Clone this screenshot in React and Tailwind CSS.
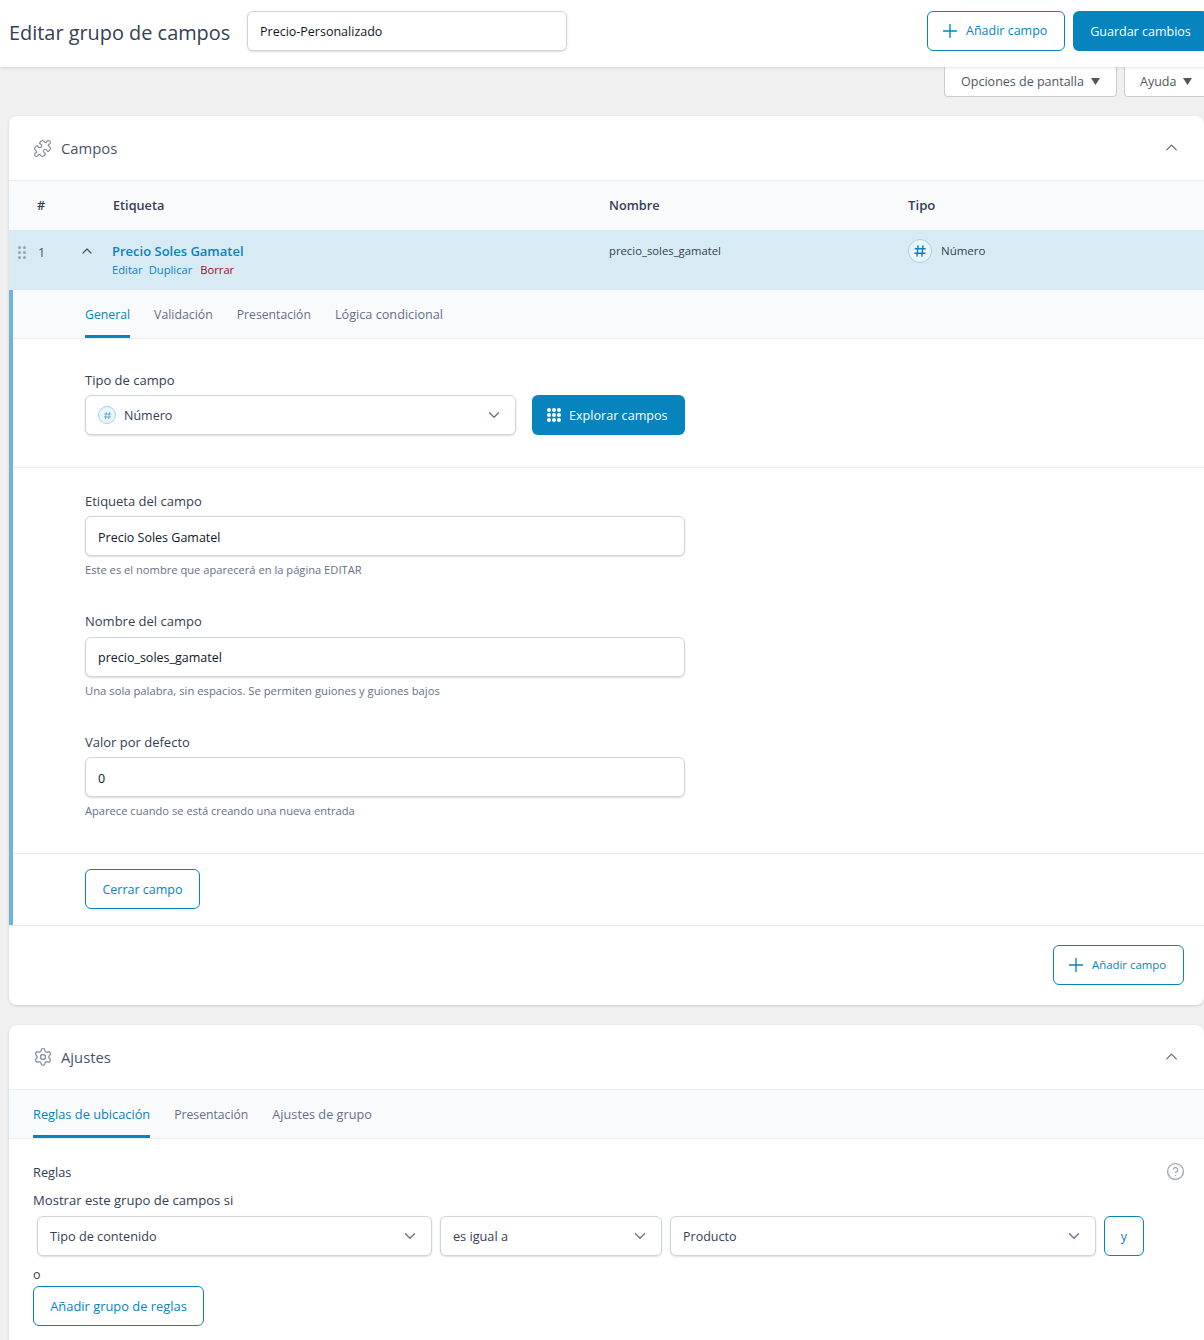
import React from "react";
import { Puzzle, Settings, CircleHelp, ChevronDown, ChevronUp, Plus } from "lucide-react";

const font = { fontFamily: '"Open Sans", "Noto Sans", sans-serif' };

function Caret() {
  return (
    <svg width="9" height="7" viewBox="0 0 9 7" className="ml-[7px] -mt-[2px]"><path d="M0 0h9L4.5 7z" fill="#50575e" /></svg>
  );
}

function OutlineBtn({ children, className = "", size = "text-[12.5px]" }) {
  return (
    <button className={`h-10 flex items-center rounded-md border border-[#0783be] bg-white text-[#0783be] shrink-0 ${size} ${className}`}>
      {children}
    </button>
  );
}

function Tab({ children, active, className = "text-[12.5px]" }) {
  return (
    <div className={`h-full flex items-center border-b-[3px] pt-[5px] ${className} ${active ? "border-[#0783be] text-[#0783be]" : "border-transparent text-[#667085]"}`}>
      {children}
    </div>
  );
}

function Select({ className, children, text, textClass = "text-[12.5px]" }) {
  return (
    <div className={`h-10 flex items-center justify-between pl-3 pr-[12px] bg-white border border-[#d0d5dd] rounded-md shadow-[0_1px_2px_rgba(16,24,40,0.15)] text-[#344054] ${className}`}>
      <div className="flex items-center">{children}<span className={`pt-[2px] ${textClass}`}>{text}</span></div>
      <ChevronDown size={18} color="#667085" strokeWidth={1.7} />
    </div>
  );
}

function Field({ label, value, hint, className = "", gap = "mt-[5px]", pad = "pt-[4px]", hintSize = "text-[11.15px]" }) {
  return (
    <div className={className}>
      <div className="h-[19px] text-[13px] leading-[19px] text-[#344054]">{label}</div>
      <div className={`${gap} ${pad} h-10 w-[600px] flex items-center px-3 bg-white border border-[#d0d5dd] rounded-md shadow-[0_1px_2px_rgba(16,24,40,0.15)] text-[12.5px] text-[#101828]`}>{value}</div>
      <div className={`mt-[6px] h-4 leading-4 text-[#667085] ${hintSize}`}>{hint}</div>
    </div>
  );
}

function CardHeader({ icon, title }) {
  return (
    <div className="h-[65px] flex items-center justify-between pl-6 pr-[23px] border-b border-[#eaecf0]">
      <div className="flex items-center gap-[9px]">
        {icon}
        <span className="pt-[1px] text-[14.8px] text-[#475467]">{title}</span>
      </div>
      <ChevronUp size={19} color="#667085" strokeWidth={1.7} className="-mt-[2px]" />
    </div>
  );
}

function Dots() {
  const p = [3, 8, 13];
  return (
    <svg width="16" height="16" viewBox="0 0 16 16" className="mr-[7px]">
      {p.map((y) => p.map((x) => <circle key={`${x}-${y}`} cx={x} cy={y} r="2" fill="#ffffff" />))}
    </svg>
  );
}

function Grip() {
  return (
    <svg width="8" height="13" viewBox="0 0 8 13">
      {[1.5, 6.5, 11.5].map((y) => [1.5, 6.5].map((x) => <circle key={`${x}-${y}`} cx={x} cy={y} r="1.5" fill="#98a2b3" />))}
    </svg>
  );
}

function HashBadge({ size, stroke, textSize }) {
  return (
    <span className={`flex items-center justify-center rounded-full border border-[#a5d2e7] bg-[#ebf5fa] ${size}`}>
      <svg viewBox="0 0 12 12" className={textSize} fill="none" stroke={stroke} strokeWidth="1.2">
        <path d="M4.4 1.2 3.4 10.8M8.6 1.2 7.6 10.8M1.5 4.1h9.4M1.2 7.9h9.4" />
      </svg>
    </span>
  );
}

export default function App() {
  return (
    <div style={font} className="h-[1340px] w-[1204px] overflow-hidden bg-[#f0f0f0]">
      <header className="relative z-10 h-[67px] bg-white shadow-[0_1px_3px_rgba(16,24,40,0.12)] flex items-center pl-[9px] -mr-1">
        <h1 className="w-[238px] whitespace-nowrap text-[19.9px] leading-none text-[#344054] -mt-[1px]">Editar grupo de campos</h1>
        <div className="w-[320px] h-10 flex items-center px-3 pt-[3px] bg-white border border-[#d0d5dd] rounded-md shadow-[0_1px_2px_rgba(16,24,40,0.15)] text-[12.5px] text-[#101828] -mt-[5px]">Precio-Personalizado</div>
        <div className="ml-auto flex gap-2 -mt-[5px]">
          <OutlineBtn className="w-[138px] gap-[5px] pl-[11px] -ml-px">
            <Plus size={22} strokeWidth={1.5} />
            <span className="pt-[1px]">Añadir campo</span>
          </OutlineBtn>
          <button className="h-10 w-[135px] pt-[3px] rounded-md bg-[#0783be] text-white text-[12.5px]">Guardar cambios</button>
        </div>
      </header>

      <div className="flex justify-end gap-[7px] -mr-[6px]">
        <div className="h-[30px] w-[173px] pt-[2px] flex items-center justify-center bg-white border border-t-0 border-[#c9ced6] rounded-b text-[12.5px] text-[#50575e]">Opciones de pantalla<Caret /></div>
        <div className="h-[30px] w-[86px] pt-[2px] flex items-center pl-[15px] bg-white border border-t-0 border-[#c9ced6] rounded-b text-[12.5px] text-[#50575e]">Ayuda<Caret /></div>
      </div>

      <main className="pl-[9px] pt-[19px] flex flex-col gap-5">
        <section className="w-[1195px] bg-white rounded-lg shadow-[0_1px_3px_rgba(16,24,40,0.15)]">
          <CardHeader icon={<Puzzle size={19} color="#8a94a6" strokeWidth={1.6} />} title="Campos" />

          <div className="h-[49px] grid grid-cols-[104px_496px_299px_1fr] items-center bg-[#f9fafb] text-[12.7px] font-semibold text-[#344054]">
            <div className="pl-[28px]">#</div>
            <div>Etiqueta</div>
            <div>Nombre</div>
            <div className="text-[13.2px]">Tipo</div>
          </div>

          <div className="h-[60px] grid grid-cols-[103px_497px_299px_1fr] bg-[#d8ebf5]">
            <div className="flex pt-[16px] pl-[9px]">
              <Grip />
              <span className="ml-[12px] -mt-[2px] text-[12.5px] text-[#475467]">1</span>
              <ChevronUp size={16} color="#475467" strokeWidth={1.8} className="ml-[34px] -mt-[3px]" />
            </div>
            <div className="pt-[12px]">
              <div className="text-[13px] leading-[18px] font-semibold text-[#0783be]">Precio Soles Gamatel</div>
              <div className="flex text-[11.2px] leading-4 text-[#0783be] mt-[2px]">
                <span className="mr-[6px]">Editar</span><span className="mr-[8px]">Duplicar</span><span className="text-[#a10a1f]">Borrar</span>
              </div>
            </div>
            <div className="pt-[13px] text-[11.3px] leading-4 text-[#344054]">precio_soles_gamatel</div>
            <div className="pt-[9px] flex items-start gap-[9px]">
              <HashBadge size="w-6 h-6" stroke="#0783be" textSize="w-[14px] h-[14px]" />
              <span className="text-[11.5px] leading-[24px] text-[#344054]">Número</span>
            </div>
          </div>

          <div className="border-l-4 border-[#72b3d9]">
            <div className="h-[49px] flex gap-6 pl-[72px] bg-[#f9fafb] border-b border-[#eaecf0]">
              <Tab active className="text-[12.25px]">General</Tab>
              <Tab className="text-[12.3px]">Validación</Tab>
              <Tab className="text-[12.2px]">Presentación</Tab>
              <Tab className="text-[12.7px]">Lógica condicional</Tab>
            </div>

            <div className="h-[129px] pl-[72px] pt-[32px] border-b border-[#eaecf0]">
              <div className="h-[19px] text-[13px] leading-[19px] text-[#344054]">Tipo de campo</div>
              <div className="mt-[5px] flex gap-4">
                <Select className="w-[431px]" text="Número">
                  <HashBadge size="w-[18px] h-[18px] mr-[8px]" stroke="#5fa8cf" textSize="w-[9px] h-[9px]" />
                </Select>
                <button className="h-10 w-[153px] flex items-center justify-start pl-[14px] rounded-md bg-[#0783be] text-white text-[12.6px]">
                  <Dots /><span className="pt-[2px]">Explorar campos</span>
                </button>
              </div>
            </div>

            <div className="h-[386px] pl-[72px] pt-[24px] border-b border-[#eaecf0]">
              <Field label="Etiqueta del campo" value="Precio Soles Gamatel" hint="Este es el nombre que aparecerá en la página EDITAR" />
              <Field className="mt-[34px]" gap="mt-[6px]" pad="pt-[2px]" hintSize="text-[11.25px]" label="Nombre del campo" value="precio_soles_gamatel" hint="Una sola palabra, sin espacios. Se permiten guiones y guiones bajos" />
              <Field className="mt-[34px]" label="Valor por defecto" value="0" hint="Aparece cuando se está creando una nueva entrada" />
            </div>

            <div className="h-[71px] pl-[72px] pt-[15px]">
              <OutlineBtn className="w-[115px] justify-center pt-[2px]">Cerrar campo</OutlineBtn>
            </div>
          </div>

          <div className="h-[80px] flex justify-end items-start pr-5 pt-[19px] border-t border-[#eaecf0]">
            <OutlineBtn size="text-[11.4px]" className="w-[131px] gap-[5px] pl-[11px]">
              <Plus size={22} strokeWidth={1.5} />
              <span>Añadir campo</span>
            </OutlineBtn>
          </div>
        </section>

        <section className="w-[1195px] bg-white rounded-lg shadow-[0_1px_3px_rgba(16,24,40,0.15)] pb-10">
          <CardHeader icon={<Settings size={20} color="#8a94a6" strokeWidth={1.6} className="-mr-px" />} title="Ajustes" />
          <div className="h-[49px] flex gap-6 pl-6 bg-[#f9fafb] border-b border-[#eaecf0]">
            <Tab active className="text-[12.8px]">Reglas de ubicación</Tab>
            <Tab className="text-[12.2px]">Presentación</Tab>
            <Tab className="text-[12.7px]">Ajustes de grupo</Tab>
          </div>
          <div className="pl-6 pr-5">
            <div className="pt-[24px] h-[44px] flex justify-between text-[12.8px] leading-[19px] text-[#344054]">
              <span>Reglas</span>
              <CircleHelp size={19} color="#98a2b3" strokeWidth={1.6} className="-mt-[1px] -mr-px" />
            </div>
            <div className="mt-[8px] h-[19px] text-[13.1px] leading-[19px] text-[#344054]">Mostrar este grupo de campos si</div>
            <div className="mt-[6px] pl-1 flex gap-2 items-center">
              <Select className="w-[395px]" text="Tipo de contenido" textClass="text-[12.7px]" />
              <Select className="w-[222px]" text="es igual a" textClass="text-[12.7px]" />
              <Select className="w-[426px]" text="Producto" />
              <OutlineBtn className="w-10 justify-center pt-[2px]">y</OutlineBtn>
            </div>
            <div className="mt-[9px] h-[19px] text-[12.5px] leading-[19px] text-[#344054]">o</div>
            <OutlineBtn size="text-[12.9px]" className="mt-[2px] w-[171px] justify-center pt-[2px]">Añadir grupo de reglas</OutlineBtn>
          </div>
        </section>
      </main>
    </div>
  );
}
